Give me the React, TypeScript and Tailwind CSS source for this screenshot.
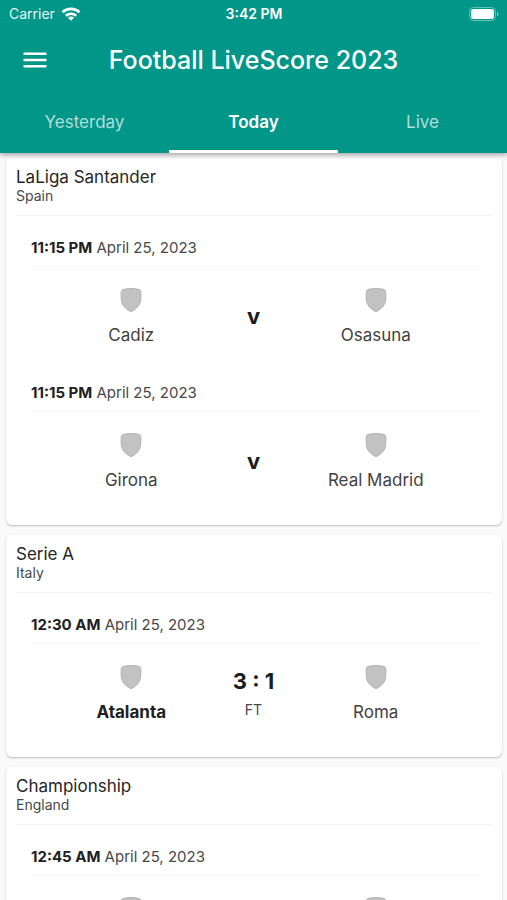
import { useState } from "react";

type Team = { name: string; winner?: boolean };
type Match = { time: string; date: string; home: Team; away: Team; score?: string; status?: string };
type League = { name: string; country: string; matches: Match[] };

const DATE = "April 25, 2023";

const LEAGUES: League[] = [
  {
    name: "LaLiga Santander",
    country: "Spain",
    matches: [
      { time: "11:15 PM", date: DATE, home: { name: "Cadiz" }, away: { name: "Osasuna" } },
      { time: "11:15 PM", date: DATE, home: { name: "Girona" }, away: { name: "Real Madrid" } },
    ],
  },
  {
    name: "Serie A",
    country: "Italy",
    matches: [
      {
        time: "12:30 AM",
        date: DATE,
        home: { name: "Atalanta", winner: true },
        away: { name: "Roma" },
        score: "3 : 1",
        status: "FT",
      },
    ],
  },
  {
    name: "Championship",
    country: "England",
    matches: [{ time: "12:45 AM", date: DATE, home: { name: "" }, away: { name: "" }, score: "" }],
  },
];

const TABS = ["Yesterday", "Today", "Live"];

function Shield() {
  return (
    <svg width="22" height="24" viewBox="0 0 22 24" aria-hidden="true">
      <path
        d="M3 1.500C7.500.3 14.500.3 19 1.500C20.300 2 20.800 3.200 20.800 4.600V10.500C20.800 16.500 16.500 21.500 11 23.600C5.500 21.500 1.200 16.500 1.200 10.500V4.600C1.200 3.200 1.700 2 3 1.500Z"
        fill="#c2c2c2"
        stroke="#b2b2b2"
        strokeWidth="1"
      />
    </svg>
  );
}

function Wifi() {
  return (
    <svg width="20" height="14" viewBox="0 0 20 14" fill="none" stroke="white" strokeWidth="2.6" aria-hidden="true">
      <path d="M1.500 5.200C6.200.8 13.800.8 18.500 5.200" />
      <path d="M4.800 8.700C7.700 6 12.300 6 15.200 8.700" />
      <path d="M10 13.800L6.900 10.700C8.600 9.100 11.400 9.100 13.100 10.700Z" fill="white" stroke="none" />
    </svg>
  );
}

function Battery() {
  return (
    <svg width="30" height="14" viewBox="0 0 30 14" aria-hidden="true">
      <rect x="0.500" y="0.500" width="26" height="13" rx="4" fill="none" stroke="white" strokeOpacity="0.400" />
      <rect x="2" y="2" width="23" height="10" rx="2.500" fill="white" />
      <path d="M28 4.800C29.900 5.500 29.900 8.500 28 9.200Z" fill="white" fillOpacity="0.500" />
    </svg>
  );
}

function TeamCell({ team }: { team: Team }) {
  return (
    <div className="flex flex-col items-center gap-[11px]">
      <Shield />
      <span className={team.winner ? "h-6 text-[17px] leading-6 font-bold text-[#212121]" : "h-6 text-[17px] leading-6 text-[#424242]"}>
        {team.name}
      </span>
    </div>
  );
}

function MatchRow({ match }: { match: Match }) {
  return (
    <li className="pt-[22px] pr-3 pb-[14px] pl-[15px]">
      <p className="border-b border-[#f5f5f5] pb-2 text-[15px] leading-5 text-[#484848]">
        <b className="font-bold text-[#212121]">{match.time}</b> {match.date}
      </p>
      <div className="grid grid-cols-[1fr_44px_1fr] pt-[21px] pr-1">
        <TeamCell team={match.home} />
        {match.status ? (
          <div className="flex flex-col items-center justify-center whitespace-nowrap">
            <span className="text-[22px] leading-[30px] font-bold text-[#1c1c1c]">{match.score}</span>
            <span className="text-sm leading-7 text-[#484848]">{match.status}</span>
          </div>
        ) : (
          <div className="flex items-center justify-center pb-1">
            <span className="text-[22px] leading-[30px] font-bold text-[#1c1c1c]">{match.score ?? "v"}</span>
          </div>
        )}
        <TeamCell team={match.away} />
      </div>
    </li>
  );
}

function LeagueCard({ league }: { league: League }) {
  return (
    <section className="shrink-0 rounded-md bg-white px-[10px] pt-[9px] pb-[19px] shadow-[0_1px_2px_rgba(0,0,0,0.25)]">
      <header className="border-b border-[#f2f2f2] pb-[10px]">
        <h2 className="text-[17px] leading-5 text-[#262626]">{league.name}</h2>
        <p className="text-sm leading-[18px] text-[#484848]">{league.country}</p>
      </header>
      <ul>
        {league.matches.map((m, i) => (
          <MatchRow key={i} match={m} />
        ))}
      </ul>
    </section>
  );
}

export default function App() {
  const [tab, setTab] = useState("Today");
  return (
    <div className="flex h-screen flex-col bg-[#fafafa] font-['Inter',sans-serif]">
      <header className="z-10 shrink-0 bg-[#009688] text-white shadow-[0_2px_5px_rgba(0,0,0,0.35)]">
        <div className="grid h-7 grid-cols-3 items-center pr-2 pl-[9px] text-sm">
          <span className="flex items-center gap-1.5 text-white/90">
            Carrier <Wifi />
          </span>
          <span className="text-center font-semibold">3:42 PM</span>
          <span className="justify-self-end">
            <Battery />
          </span>
        </div>
        <div className="grid h-16 grid-cols-[48px_1fr_48px] items-center px-[11px]">
          <button type="button" aria-label="Open menu" className="flex size-12 items-center justify-center">
            <svg width="24" height="16" viewBox="0 0 24 16" fill="white" aria-hidden="true">
              <path d="M0.500 0.500H23.500V3H0.500ZM0.500 6.800H23.500V9.300H0.500ZM0.500 13H23.500V15.500H0.500Z" />
            </svg>
          </button>
          <h1 className="text-center text-[25px] leading-8 font-medium whitespace-nowrap">Football LiveScore 2023</h1>
        </div>
        <div role="tablist" className="grid h-[61px] grid-cols-3">
          {TABS.map((t) => (
            <button
              key={t}
              type="button"
              role="tab"
              aria-selected={t === tab}
              onClick={() => setTab(t)}
              className={
                t === tab
                  ? "border-b-3 border-white pt-1 text-[17px] font-semibold"
                  : "border-b-3 border-transparent pt-1 text-[17px] text-white/70"
              }
            >
              {t}
            </button>
          ))}
        </div>
      </header>
      <main className="flex min-h-0 flex-1 flex-col gap-[10px] overflow-y-auto pt-[5px] pr-[5px] pl-1.5 [scrollbar-width:none]">
        {LEAGUES.map((l) => (
          <LeagueCard key={l.name} league={l} />
        ))}
      </main>
    </div>
  );
}
